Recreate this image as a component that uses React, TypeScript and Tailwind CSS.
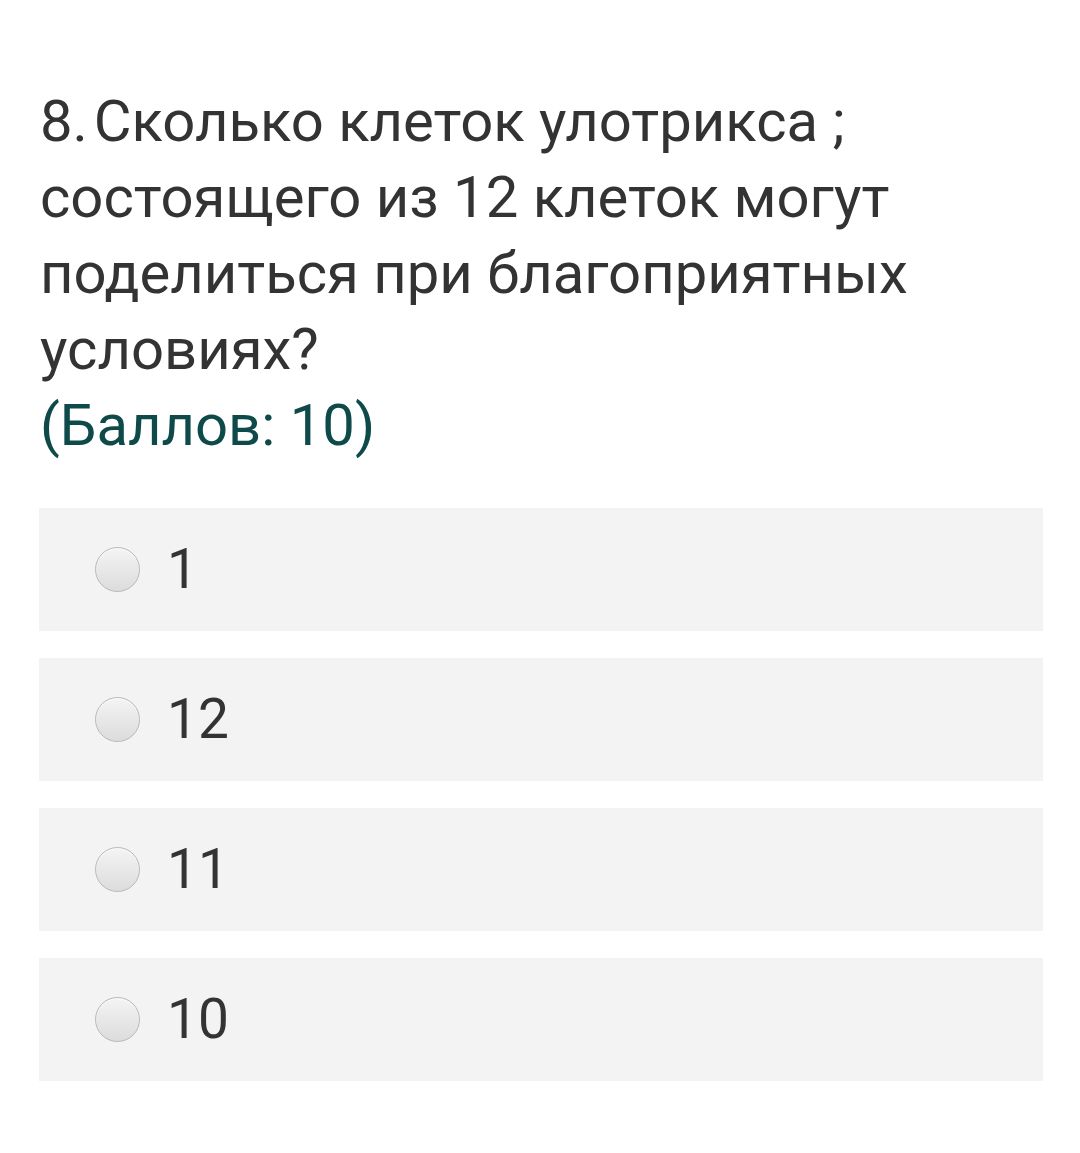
import React from 'react';

const options = ['1', '12', '11', '10'];

function Radio() {
  return (
    <span className="block w-[45px] h-[45px] shrink-0 rounded-full border border-[#b9b9b9] bg-gradient-to-b from-[#f4f4f4] to-[#dcdcdc] shadow-[inset_0_1px_1px_rgba(255,255,255,0.8)]" />
  );
}

export default function App() {
  return (
    <div className="w-[1080px] min-h-[1153px] bg-white font-['Roboto',sans-serif] pl-[39px] pr-[37px] pt-[83px]">
      <div className="pl-[1px] text-[58px] leading-[76px] text-[#333333] pr-[10px]">
        <p>{'8.\u200AСколько клеток улотрикса ; состоящего из 12 клеток могут поделиться при благоприятных условиях?'}</p>
        <p className="text-[#0e4a4a]">(Баллов: 10)</p>
      </div>

      <div className="mt-[45px] flex flex-col gap-[27px]">
        {options.map((opt) => (
          <label key={opt} className="flex items-center h-[123px] bg-[#f3f3f3] pl-[56px] gap-[27px] cursor-pointer">
            <Radio />
            <span className="text-[55px] leading-none text-[#333333]">{opt}</span>
          </label>
        ))}
      </div>
    </div>
  );
}
